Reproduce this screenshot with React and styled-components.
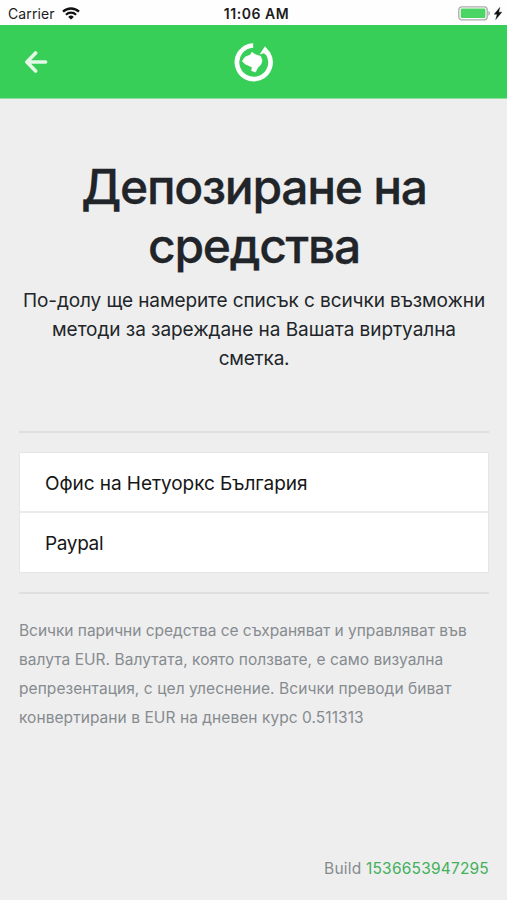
import React from 'react';
import styled, { createGlobalStyle } from 'styled-components';

const GlobalStyle = createGlobalStyle`
  * {
    box-sizing: border-box;
  }

  body {
    margin: 0;
    background-color: #eeeeee;
    color: #212529;
    font-family: Inter, 'Liberation Sans', sans-serif;
  }
`;

const Main = styled.main`
  display: flex;
  flex-direction: column;
  width: 100%;
  height: 900px;
  overflow: hidden;
  white-space: nowrap;
`;

const StatusBar = styled.div`
  display: grid;
  grid-template-columns: 1fr auto 1fr;
  align-items: center;
  height: 25px;
  padding: 2px 5px 0 8px;
  background-color: #fefefe;
  color: #1c1c1c;
  font-size: 14px;
  line-height: 22px;
`;

const Carrier = styled.div`
  display: flex;
  align-items: center;
  gap: 7px;
  letter-spacing: 0.1px;
`;

const Clock = styled.span`
  padding-left: 3px;
  font-weight: 600;
  letter-spacing: 0.55px;
`;

const Battery = styled.div`
  display: flex;
  justify-content: flex-end;
  align-items: center;
  gap: 3px;
`;

const Header = styled.header`
  display: grid;
  grid-template-columns: 1fr auto 1fr;
  align-items: center;
  height: 74px;
  padding: 0 24px;
  background-color: #37cf57;
  border-bottom: 1px solid #8fe0a0;
`;

const BackButton = styled.button`
  display: flex;
  width: 24px;
  padding: 0;
  border: none;
  background: none;
  cursor: pointer;
`;

const Section = styled.section`
  display: flex;
  flex-direction: column;
  flex: 1;
  padding: 59px 18px 17px 19px;
`;

const Title = styled.h1`
  margin: 0 0 10px;
  text-align: center;
  font-size: 48px;
  font-weight: 500;
  line-height: 58.8px;
  -webkit-text-stroke: 0.3px #212529;
`;

const Lead = styled.p`
  margin: 0 0 57px;
  text-align: center;
  font-size: 19px;
  line-height: 29.4px;
`;

const Line = styled.span`
  display: block;
  letter-spacing: ${(props) => props.$spacing || 0}px;
`;

const Divider = styled.hr`
  width: 100%;
  height: 2px;
  margin: 0;
  border: none;
  background-color: #dfdfdf;
`;

const Ul = styled.ul`
  margin: 19px 0;
  padding: 0;
  list-style: none;
  background-color: #fff;
  border: 1px solid #e6e6e6;
`;

const Item = styled.li`
  height: 60px;
  padding: 0 25px;
  font-size: 19px;
  line-height: 61px;
  color: #161616;
  letter-spacing: ${(props) => props.$spacing || 0}px;

  & + & {
    height: 61px;
    border-top: 2px solid #ebebeb;
    margin-top: -2px;
  }
`;

const Note = styled.p`
  margin: 22px 0 0;
  font-size: 15.5px;
  line-height: 29.2px;
  color: #868b90;
`;

const Build = styled.footer`
  margin-top: auto;
  text-align: right;
  font-size: 15.5px;
  line-height: 29px;
  letter-spacing: 0.2px;
  color: #868b90;

  span {
    color: #43b05c;
  }
`;

const WifiIcon = () => (
  <svg width="18" height="13" viewBox="0 0 18 13" fill="none" stroke="#111">
    <path d="M1 4.7a11.6 11.6 0 0 1 16 0" strokeWidth="2.3" />
    <path d="M3.9 7.7a7.3 7.3 0 0 1 10.2 0" strokeWidth="2.2" />
    <path d="M9 12.6 6.2 9.9a4 4 0 0 1 5.6 0z" fill="#111" stroke="none" />
  </svg>
);

const BatteryIcon = () => (
  <svg width="33" height="15" viewBox="0 0 33 15">
    <rect x="0.8" y="0.8" width="28.4" height="13" rx="3" fill="#fff" stroke="#a9aaa9" strokeWidth="1.3" />
    <rect x="2.7" y="2.6" width="24.7" height="9.4" rx="1.2" fill="#4bd565" />
    <path d="M30.4 5c2 .7 2 4 0 4.8z" fill="#a9aaa9" />
  </svg>
);

const BoltIcon = () => (
  <svg width="8" height="13" viewBox="0 0 8 13">
    <path d="M5.8.4.2 7.2h3L1.7 12.6 7.8 5.2H4.7z" fill="#111" stroke="#111" strokeWidth="0.4" />
  </svg>
);

const ArrowIcon = () => (
  <svg width="24" height="22" viewBox="0 0 24 22" fill="none" stroke="#e4f8e7" strokeWidth="3.6">
    <path d="M11.6 2 2.9 11l8.7 9M3.4 11H21.6" strokeLinejoin="round" strokeLinecap="round" />
  </svg>
);

const Logo = () => (
  <svg width="40" height="40" viewBox="0 0 40 40">
    <path
      d="M19.2 3.5A16.8 16.8 0 1 0 34 11.4"
      fill="none"
      stroke="#fff"
      strokeWidth="4.7"
    />
    <path d="M31 4.2 36.4 10.8 32.2 13.2 29.8 11.2 25.6 12.4z" fill="#fff" />
    <path
      d="M8.4 19.2 11 15.2 16.4 13 18 10.2 21 12.6 26.6 14.4 28 18.4 26.8 22.6 23.5 25.8 21.4 30 17.6 28.6 18.4 25.2 14.3 23.3 11 21.8z"
      fill="#fff"
      stroke="#fff"
      strokeWidth="0.8"
      strokeLinejoin="round"
    />
  </svg>
);

class App extends React.Component {
  state = {
    methods: [
      { id: 0, name: 'Офис на Нетуоркс България', spacing: -0.06 },
      { id: 1, name: 'Paypal', spacing: -0.35 },
    ],
    build: '1536653947295',
  };

  render() {
    return (
      <Main>
        <GlobalStyle />
        <StatusBar>
          <Carrier>
            Carrier
            <WifiIcon />
          </Carrier>
          <Clock>11:06 AM</Clock>
          <Battery>
            <BatteryIcon />
            <BoltIcon />
          </Battery>
        </StatusBar>

        <Header>
          <BackButton>
            <ArrowIcon />
          </BackButton>
          <Logo />
        </Header>

        <Section>
          <Title>
            <Line $spacing={-1.3}>Депозиране на</Line>
            <Line $spacing={-1.3}>средства</Line>
          </Title>
          <Lead>
            <Line $spacing={-0.1}>По-долу ще намерите списък с всички възможни</Line>
            <Line $spacing={-0.05}>методи за зареждане на Вашата виртуална</Line>
            <Line $spacing={-0.2}>сметка.</Line>
          </Lead>

          <Divider />
          <Ul>
            {this.state.methods.map((method) => (
              <Item key={method.id} $spacing={method.spacing}>
                {method.name}
              </Item>
            ))}
          </Ul>
          <Divider />

          <Note>
            <Line $spacing={-0.03}>Всички парични средства се съхраняват и управляват във</Line>
            <Line $spacing={0.04}>валута EUR. Валутата, която ползвате, е само визуална</Line>
            <Line $spacing={0.07}>репрезентация, с цел улеснение. Всички преводи биват</Line>
            <Line $spacing={0.06}>конвертирани в EUR на дневен курс 0.511313</Line>
          </Note>

          <Build>
            Build <span>{this.state.build}</span>
          </Build>
        </Section>
      </Main>
    );
  }
}

export default App;
